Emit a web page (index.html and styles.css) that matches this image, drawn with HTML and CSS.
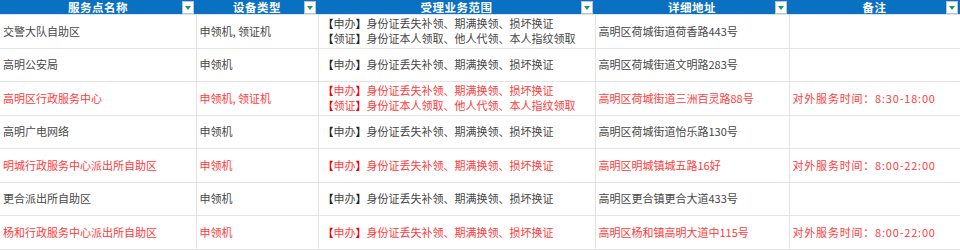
FILE: index.html
```html
<!DOCTYPE html>
<html lang="zh-CN">
<head>
<meta charset="utf-8">
<title>服务点</title>
<link rel="stylesheet" href="styles.css">
</head>
<body>
<table class="sheet">
  <colgroup>
    <col class="c1"><col class="c2"><col class="c3"><col class="c4"><col class="c5">
  </colgroup>
  <thead>
    <tr>
      <th><span class="h">服务点名称</span><span class="dd"></span></th>
      <th><span class="h">设备类型</span><span class="dd"></span></th>
      <th><span class="h">受理业务范围</span><span class="dd"></span></th>
      <th><span class="h">详细地址</span><span class="dd"></span></th>
      <th><span class="h">备注</span><span class="dd"></span></th>
    </tr>
  </thead>
  <tbody>
    <tr>
      <td>交警大队自助区</td>
      <td>申领机, 领证机</td>
      <td><div><b>【</b>申办<b>】</b>身份证丢失补领、期满换领、损坏换证</div><div><b>【</b>领证<b>】</b>身份证本人领取、他人代领、本人指纹领取</div></td>
      <td>高明区荷城街道荷香路443号</td>
      <td></td>
    </tr>
    <tr>
      <td>高明公安局</td>
      <td>申领机</td>
      <td><b>【</b>申办<b>】</b>身份证丢失补领、期满换领、损坏换证</td>
      <td>高明区荷城街道文明路283号</td>
      <td></td>
    </tr>
    <tr class="red">
      <td>高明区行政服务中心</td>
      <td>申领机, 领证机</td>
      <td><div><b>【</b>申办<b>】</b>身份证丢失补领、期满换领、损坏换证</div><div><b>【</b>领证<b>】</b>身份证本人领取、他人代领、本人指纹领取</div></td>
      <td>高明区荷城街道三洲百灵路88号</td>
      <td class="note">对外服务时间：8:30-18:00</td>
    </tr>
    <tr>
      <td>高明广电网络</td>
      <td>申领机</td>
      <td><b>【</b>申办<b>】</b>身份证丢失补领、期满换领、损坏换证</td>
      <td>高明区荷城街道怡乐路130号</td>
      <td></td>
    </tr>
    <tr class="red">
      <td>明城行政服务中心派出所自助区</td>
      <td>申领机</td>
      <td><b>【</b>申办<b>】</b>身份证丢失补领、期满换领、损坏换证</td>
      <td>高明区明城镇城五路16好</td>
      <td class="note">对外服务时间：8:00-22:00</td>
    </tr>
    <tr>
      <td>更合派出所自助区</td>
      <td>申领机</td>
      <td><b>【</b>申办<b>】</b>身份证丢失补领、期满换领、损坏换证</td>
      <td>高明区更合镇更合大道433号</td>
      <td></td>
    </tr>
    <tr class="red">
      <td>杨和行政服务中心派出所自助区</td>
      <td>申领机</td>
      <td><b>【</b>申办<b>】</b>身份证丢失补领、期满换领、损坏换证</td>
      <td>高明区杨和镇高明大道中115号</td>
      <td class="note">对外服务时间：8:00-22:00</td>
    </tr>
  </tbody>
</table>
</body>
</html>
```
FILE: styles.css
```css
html, body {
  margin: 0;
  padding: 0;
  background: #ffffff;
}
body {
  font-family: "Noto Sans CJK SC", "Noto Sans", sans-serif;
  font-size: 11px;
  color: #474747;
}
.sheet {
  border-collapse: collapse;
  table-layout: fixed;
  width: 960px;
}
.c1 { width: 196px; }
.c2 { width: 122px; }
.c3 { width: 277px; }
.c4 { width: 194px; }
.c5 { width: 171px; }

.sheet th {
  background: #0a70c2;
  color: #ffffff;
  font-weight: bold;
  font-size: 11.5px;
  height: 14px;
  padding: 0;
  text-align: center;
  position: relative;
  line-height: 14px;
  border-bottom: 1px solid #d8e4f0;
}
.h { letter-spacing: 0.5px; }
.dd {
  position: absolute;
  right: 2px;
  top: 1px;
  width: 10px;
  height: 11px;
  background: #ffffff;
  border: 1px solid #b8c4d0;
}
.dd::after {
  content: "";
  position: absolute;
  left: 2px;
  top: 4px;
  border-left: 3px solid transparent;
  border-right: 3px solid transparent;
  border-top: 4px solid #1e9a5e;
}
.sheet td {
  height: 32.5px;
  padding: 0 0 0 3px;
  border: 1px solid #e4e4e4;
  border-top: none;
  vertical-align: middle;
  white-space: nowrap;
  line-height: 15px;
  overflow: hidden;
}
.sheet td:first-child { border-left: none; }
.sheet td:last-child { border-right: none; }
.sheet td:nth-child(3) { padding-left: 4px; }
.sheet b {
  font-weight: bold;
  color: #222222;
}
.red td { color: #ff3c3c; }
.red b { color: #ee0000; }
.note { letter-spacing: 0.8px; }
```
